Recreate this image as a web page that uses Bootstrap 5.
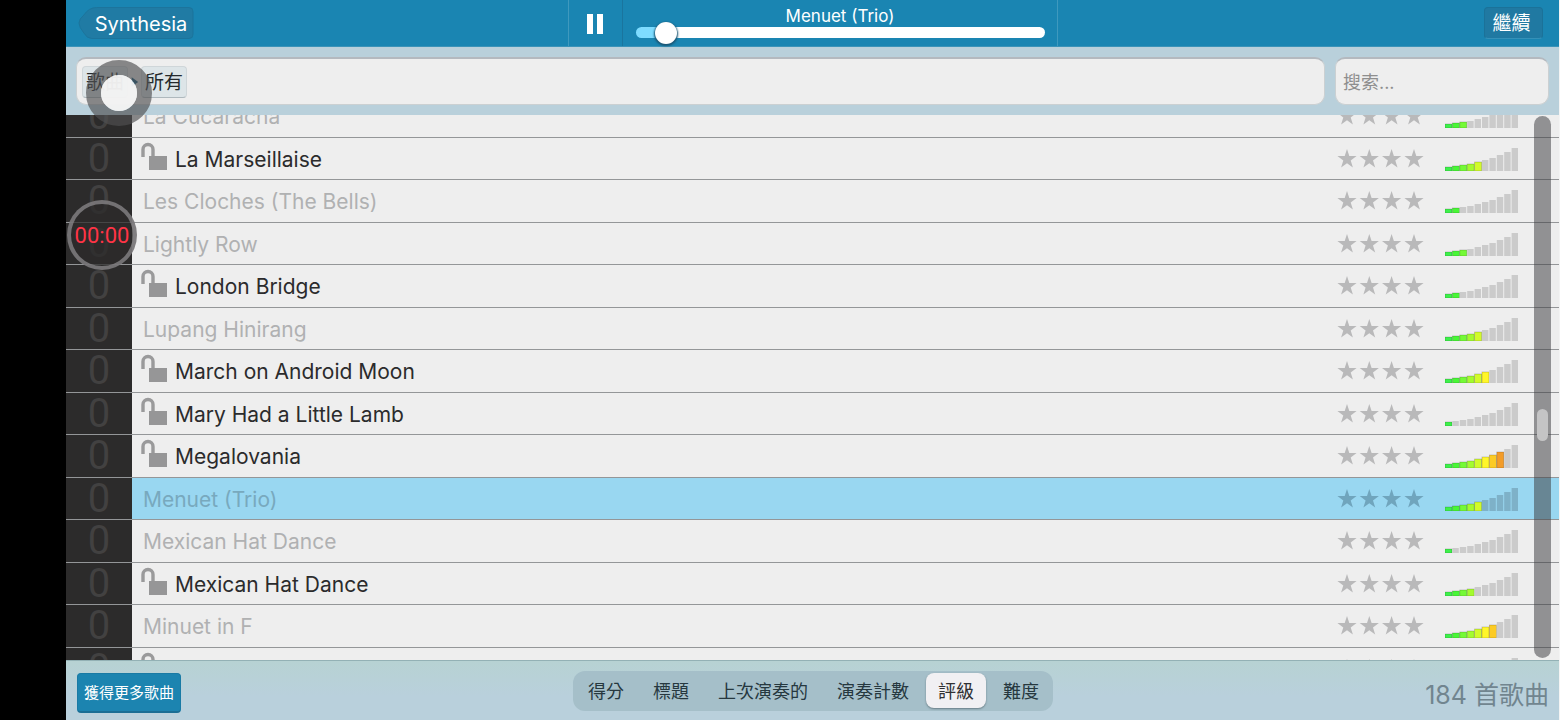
<!DOCTYPE html>
<html lang="zh-Hant">
<head>
<meta charset="utf-8">
<meta name="viewport" content="width=device-width, initial-scale=1">
<title>Synthesia</title>
<link rel="stylesheet" href="https://cdn.jsdelivr.net/npm/bootstrap@5.3.0/dist/css/bootstrap.min.css">
<style>
  body { font-family: Inter, "Noto Sans CJK TC", sans-serif; background: #000; color: #2b2b2c; }
  button, input { font-family: inherit; }
  .app-shell { margin: 0 1px 0 66px; background: #b9d0db; box-shadow: 1px 0 #f4f4f4; }

  .top-bar { display: grid; grid-template-columns: 1fr 490px 1fr; height: 47px; background: #1a85b2; color: #fff; border-bottom: 1px solid #3b93b8; }
  .side-zone { flex: 1 1 0; min-width: 0; }
  .back-btn { width: 116px; height: 32px; padding: 0 0 0 10px; color: #fff; font-size: 20px; line-height: 34px; background: none; border: 0; }
  .back-shape { position: absolute; inset: 0; width: 100%; height: 100%; }
  .bar-btn { width: 59px; height: 32px; color: #fff; font-size: 19px; line-height: 32px; background: #2079a2; border: 1px solid #1b7299; border-bottom-color: #3591b8; border-radius: 4px; padding: 0 4px 0 0; }
  .player { border-right: 1px solid #3f99be; border-left: 1px solid #3f99be; }
  .pause-btn { width: 54px; border: 0; border-right: 1px solid #1a759e; background: none; padding: 0; }
  .track-box { padding: 5px 12px 0 13px; }
  .track-title { font-size: 17px; line-height: 22px; }
  .seek { appearance: none; -webkit-appearance: none; display: block; width: 100%; height: 11px; border-radius: 6px; margin: 0; background: linear-gradient(90deg, #7edcff 8%, #fff 8%); }
  .seek::-webkit-slider-thumb { -webkit-appearance: none; width: 22px; height: 22px; border-radius: 50%; background: #fff; box-shadow: 0 1px 2px 1px #1b5674; }

  .filter-bar { height: 68px; padding: 10px; gap: 10px; }
  .crumbs, .search-box { height: 48px; background: #eee; border: 1px solid #cbd0d2; border-top: 2px solid #b4b9bf; border-radius: 10px; }
  .crumbs { padding: 0 5px; }
  .crumb-btn { height: 32px; padding: 0 3px; font-size: 19px; line-height: 31px; color: #252a2d; background: #dde5e8; border: 1px solid #cfd6d9; border-bottom-color: #aeb8bd; border-radius: 4px; }
  .crumb-arrow { width: 13px; }
  .search-box { width: 214px; padding: 2px 7px 0; font-size: 18px; color: #333; outline: 0; }
  .search-box::placeholder { color: #8e8e8e; opacity: 1; }

  .song-area { min-height: 0; background: #eee; }
  .song-list { margin-top: -20px; }
  .song-row { height: 42px; padding: 0; border: 0; border-bottom: 1px solid #949698; border-radius: 0; background: #eee; font-size: 21px; color: #b0b1b2; }
  .song-row:nth-child(odd) { height: 43px; }
  .song-row.unlocked { color: #2b2b2c; }
  .song-row.chosen { background: #99d7f1; color: #78a9be; }
  .score-cell { width: 66px; overflow: hidden; background: #2c2b2b; color: #424141; font-family: Roboto, sans-serif; font-size: 40px; line-height: 42px; }
  .title-cell { padding-left: 11px; line-height: 43px; }
  .lock-icon { width: 26px; height: 28px; margin: 4px 8px 0 -2px; }
  .star-icons { width: 90px; height: 20px; margin-right: 18px; fill: #b9b9ba; }
  .level-icon { width: 75px; height: 24px; margin: 0 39px 0 0; }
  .chosen .star-icons { fill: #70a5bd; }
  .scroll-track { position: absolute; z-index: 2; top: 1px; bottom: 2px; right: 8px; width: 17px; border-radius: 9px; background: rgba(60, 60, 63, .52); }
  .scroll-thumb { position: absolute; top: 54%; left: 3px; right: 3px; height: 32px; border-radius: 6px; background: #c4c4c5; }

  .bottom-bar { height: 60px; padding: 0 10px 0 11px; border-top: 1px solid #93b1b5; background: linear-gradient(#b7d2d3, #b9d0dc 60%); }
  .more-btn { width: 104px; height: 40px; margin-top: 4px; padding: 3px 0 0; color: #fff; font-size: 15px; background: #1c84b0; border: 1px solid #197aa5; border-bottom: 2px solid #1a6e94; border-radius: 4px; }
  .sort-tabs { height: 40px; gap: 5px; padding: 2px 2px 3px 3px; border-radius: 12px; background: #a5bfc9; }
  .sort-tab { height: 35px; padding: 0 12px; font-size: 18px; line-height: 38px; color: #26383f; background: none; border: 0; border-radius: 8px; white-space: nowrap; }
  .sort-tab.picked { background: #f1f0f3; color: #303033; box-shadow: 0 1px 2px #687c85; }
  .song-count { padding-top: 8px; font-size: 25px; line-height: 36px; color: #71858f; }

  .touch-dot { position: absolute; z-index: 5; left: 86px; top: 60px; width: 66px; height: 66px; border: 15px solid rgba(80, 80, 82, .66); border-radius: 50%; pointer-events: none; }
  .touch-dot::after { content: ""; position: absolute; inset: 0; border-radius: 50%; background: rgba(242, 242, 242, .97); }
  .rec-clock { position: absolute; z-index: 5; left: 67px; top: 200px; width: 70px; height: 70px; border: 4px solid rgba(140, 138, 140, .75); border-radius: 50%; background: rgba(44, 43, 43, .75); color: #ff3446; font: 400 22px/64px Roboto, sans-serif; }
</style>
</head>
<body>
<svg width="0" height="0" class="position-absolute" aria-hidden="true">
  <symbol id="stars" viewBox="0 0 90 20">
    <path id="star" d="M10 0l2.300 7h7.300l-5.900 4.400 2.200 7.100-5.900-4.300-5.900 4.300 2.200-7.100-5.900-4.400h7.300z"/>
    <use href="#star" x="22.300"/><use href="#star" x="44.600"/><use href="#star" x="67"/>
  </symbol>
  <symbol id="lock" viewBox="0 0 26 28">
    <path d="M2 15V7.500a5 5 0 0 1 10 0V15" fill="none" stroke="#9a9a9b" stroke-width="3.400"/>
    <path d="M8 14h18v14H8z" fill="#969697"/>
  </symbol>
</svg>

<div class="app-shell vh-100 d-flex flex-column overflow-hidden">
  <header class="top-bar flex-shrink-0">
    <div class="d-flex align-items-center ps-2">
      <button type="button" class="back-btn position-relative ms-1">
        <svg class="back-shape" viewBox="0 0 118 32" preserveAspectRatio="none" aria-hidden="true"><path d="M19 .5H113q4 0 4 4v23q0 4-4 4H14Q9 31.500 6 26 1 20 1 16T6 8Q11 .5 19 .5z" fill="#207ba4" stroke="#1c749c"/></svg>
        <span class="position-relative">Synthesia</span>
      </button>
    </div>
    <div class="player d-flex">
      <button type="button" class="pause-btn flex-shrink-0" aria-label="Pause">
        <svg width="18" height="22" viewBox="0 0 18 22" aria-hidden="true"><path d="M1 1h6v20H1zM11 1h6v20h-6z" fill="#fff"/></svg>
      </button>
      <div class="track-box flex-grow-1 text-center">
        <label for="seek" class="track-title d-block">Menuet (Trio)</label>
        <input id="seek" class="seek" type="range" min="0" max="100" value="5">
      </div>
    </div>
    <div class="d-flex align-items-center justify-content-end pe-3">
      <button type="button" class="bar-btn">繼續</button>
    </div>
  </header>

  <div class="filter-bar d-flex flex-shrink-0">
    <nav class="crumbs d-flex align-items-center flex-grow-1">
      <button type="button" class="crumb-btn">歌曲</button>
      <svg class="crumb-arrow" height="12" viewBox="0 0 14 12" aria-hidden="true"><path d="M4 1l7 5-7 5z" fill="#11577c"/></svg>
      <button type="button" class="crumb-btn">所有</button>
    </nav>
    <input type="search" class="search-box" placeholder="搜索..." aria-label="搜索">
  </div>

  <main class="song-area flex-grow-1 position-relative overflow-hidden">
    <ul class="song-list list-group" id="songs"></ul>
    <div class="scroll-track"><div class="scroll-thumb"></div></div>
  </main>

  <footer class="bottom-bar d-flex flex-shrink-0">
    <div class="side-zone d-flex align-items-center">
      <button type="button" class="more-btn">獲得更多歌曲</button>
    </div>
    <div class="sort-tabs d-flex align-self-center">
      <button type="button" class="sort-tab">得分</button>
      <button type="button" class="sort-tab">標題</button>
      <button type="button" class="sort-tab">上次演奏的</button>
      <button type="button" class="sort-tab">演奏計數</button>
      <button type="button" class="sort-tab picked">評級</button>
      <button type="button" class="sort-tab">難度</button>
    </div>
    <div class="side-zone d-flex align-items-center justify-content-end">
      <span class="song-count">184 首歌曲</span>
    </div>
  </footer>
</div>

<div class="touch-dot"></div>
<div class="rec-clock text-center">00:00</div>

<script>
  // title, level out of ten, unlocked
  const songs = [
    ["La Cucaracha", 3, false], ["La Marseillaise", 5, true],
    ["Les Cloches (The Bells)", 2, false], ["Lightly Row", 3, false],
    ["London Bridge", 2, true], ["Lupang Hinirang", 5, false],
    ["March on Android Moon", 6, true], ["Mary Had a Little Lamb", 1, true],
    ["Megalovania", 8, true], ["Menuet (Trio)", 5, false],
    ["Mexican Hat Dance", 1, false], ["Mexican Hat Dance", 4, true],
    ["Minuet in F", 7, false], ["", 0, true]
  ];
  const chosen = 9;
  const heights = [4, 5, 6, 7, 9, 11, 13, 16, 19, 23];
  const hues = ["#3df04a", "#48f636", "#74fa36", "#a4fb2e", "#d2fb2a", "#fff62a", "#fccb24", "#f39c28", "#ee6c1e", "#e83c1c"];
  const levelBars = (level, off) => heights.map((h, i) => {
    const x = (i * 7.4).toFixed(1);
    return i < level
      ? `<rect x="${x}" y="${24 - h}" width="7" height="${h}" fill="${hues[i]}" stroke="#000" stroke-opacity=".22" stroke-width=".8"/>`
      : `<rect x="${x}" y="${24 - h}" width="6.400" height="${h}" fill="${off}"/>`;
  }).join("");
  document.getElementById("songs").innerHTML = songs.map(([title, level, open], i) => `
    <li class="list-group-item song-row d-flex flex-shrink-0 ${open ? "unlocked" : ""} ${i === chosen ? "chosen" : ""}">
      <span class="score-cell text-center flex-shrink-0">0</span>
      <span class="title-cell d-flex flex-grow-1">${open ? '<svg class="lock-icon flex-shrink-0" aria-hidden="true"><use href="#lock"/></svg>' : ""}${title}</span>
      <svg class="star-icons flex-shrink-0 align-self-center" aria-hidden="true"><use href="#stars"/></svg>
      <svg class="level-icon flex-shrink-0 align-self-center" viewBox="0 0 75 24" aria-hidden="true">${levelBars(level, i === chosen ? "#7eb1c8" : "#cbcbcb")}</svg>
    </li>`).join("");
</script>
<script src="https://cdn.jsdelivr.net/npm/bootstrap@5.3.0/dist/js/bootstrap.bundle.min.js"></script>
</body>
</html>
